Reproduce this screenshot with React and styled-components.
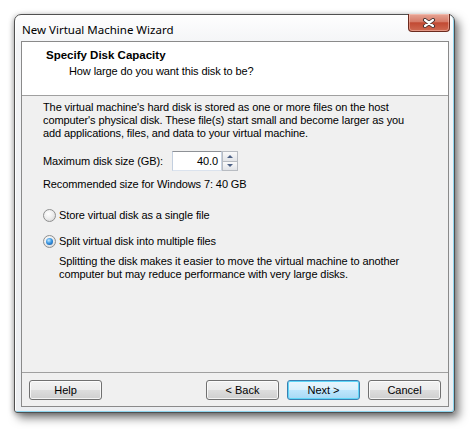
import styled, { createGlobalStyle } from 'styled-components';

const GlobalStyle = createGlobalStyle`
  html, body {
    margin: 0;
    padding: 0;
    background: #ffffff;
  }
  body {
    font-family: "Liberation Sans", Arial, sans-serif;
  }
`;

const Page = styled.div`
  width: 474px;
  height: 431px;
  box-sizing: border-box;
  padding: 14px 0 0 14px;
`;

const Window = styled.div`
  width: 441px;
  height: 399px;
  box-sizing: border-box;
  display: flex;
  flex-direction: column;
  border: 1px solid #505050;
  border-radius: 7px 7px 3px 3px;
  background: linear-gradient(to bottom, #fefefe 0%, #f3f4f6 30px, #eceef1 100%);
  box-shadow:
    inset -1px -1px 0 #8fd6ef,
    inset 1px 1px 0 #ffffff,
    4px 5px 10px rgba(0, 0, 0, 0.5),
    -1px 1px 5px rgba(0, 0, 0, 0.25);
`;

const TitleBar = styled.div`
  height: 26px;
  flex: none;
  display: flex;
  align-items: flex-start;
  justify-content: space-between;
  padding: 0 4px 0 7px;
`;

const Title = styled.div`
  font-family: "Noto Sans", "Open Sans", sans-serif;
  font-size: 11.5px;
  line-height: 26px;
  padding-top: 2px;
  color: #000;
`;

const CloseButton = styled.div`
  width: 42px;
  height: 18px;
  margin-top: -1px;
  box-sizing: border-box;
  border: 1px solid #6b2a1e;
  border-top: none;
  border-radius: 0 0 4px 4px;
  background: linear-gradient(to bottom, #e7a596 0%, #d67b68 45%, #c24a33 52%, #cf6a52 100%);
  box-shadow: inset 0 0 0 1px rgba(255, 210, 200, 0.45);
  display: flex;
  align-items: center;
  justify-content: center;
`;

const Client = styled.div`
  flex: none;
  height: 366px;
  margin: 0 5px 0 6px;
  box-sizing: border-box;
  border: 1px solid #8a8a8a;
  background: #f0f0f0;
  display: flex;
  flex-direction: column;
`;

const Header = styled.div`
  flex: none;
  box-sizing: border-box;
  height: 54px;
  background: #ffffff;
  border-bottom: 1px solid #a0a0a0;
  padding-left: 24px;
  padding-top: 7px;
`;

const HeaderTitle = styled.div`
  font-weight: bold;
  font-size: 11.5px;
  line-height: 13px;
  color: #000;
`;

const HeaderSub = styled.div`
  font-size: 11px;
  line-height: 13px;
  letter-spacing: -0.1px;
  margin-top: 3px;
  padding-left: 23px;
  color: #000;
`;

const Body = styled.div`
  flex: 1;
  padding: 5px 0 0 21px;
  font-size: 11px;
  line-height: 13px;
  letter-spacing: -0.1px;
  color: #000;
  white-space: nowrap;
`;

const Paragraph = styled.p`
  margin: ${(p) => p.$top || 0}px 0 0 ${(p) => p.$indent || 0}px;
`;

const SizeRow = styled.div`
  display: flex;
  align-items: center;
  margin-top: 11px;
  height: 20px;
`;

const SizeLabel = styled.span`
  width: 129px;
`;

const Spinner = styled.div`
  display: flex;
  height: 20px;
`;

const NumberField = styled.div`
  width: 50px;
  box-sizing: border-box;
  border: 1px solid;
  border-color: #8e9196 #c9d4e2 #dbe3ee #c3cfdf;
  background: #ffffff;
  text-align: right;
  padding-right: 3px;
  line-height: 18px;
`;

const SpinButtons = styled.div`
  display: flex;
  flex-direction: column;
  width: 16px;
`;

const SpinButton = styled.div`
  flex: 1;
  box-sizing: border-box;
  border: 1px solid #b8bcc2;
  border-top-width: ${(p) => (p.$down ? 0 : 1)}px;
  background: linear-gradient(to bottom, #fafafa, #e2e4e8);
  display: flex;
  align-items: center;
  justify-content: center;
`;

const Arrow = styled.span`
  width: 0;
  height: 0;
  border-left: 3px solid transparent;
  border-right: 3px solid transparent;
  border-bottom: ${(p) => (p.$down ? 'none' : '3px solid #4d6185')};
  border-top: ${(p) => (p.$down ? '3px solid #4d6185' : 'none')};
`;

const RadioRow = styled.label`
  display: flex;
  align-items: center;
  height: 13px;
  margin-top: ${(p) => p.$top}px;
`;

const RadioMark = styled.span`
  width: 13px;
  height: 13px;
  box-sizing: border-box;
  border-radius: 50%;
  border: 1px solid #8e8f8f;
  background: radial-gradient(circle at 40% 35%, #ffffff 0%, #ececec 50%, #cfcfcf 100%);
  display: flex;
  align-items: center;
  justify-content: center;
  margin-right: 3px;

  &::after {
    content: '';
    width: 7px;
    height: 7px;
    border-radius: 50%;
    display: ${(p) => (p.$checked ? 'block' : 'none')};
    background: radial-gradient(circle at 40% 35%, #c4e9ff 0%, #3b97e2 45%, #0c4a97 100%);
  }
`;

const Footer = styled.div`
  flex: none;
  height: 34px;
  box-sizing: border-box;
  border-top: 1px solid #a0a0a0;
  padding: 7px 7px 0 7px;
  display: flex;
  align-items: flex-start;
  gap: 8px;
`;

const Spacer = styled.div`
  flex: 1;
`;

const Button = styled.button`
  width: 73px;
  height: 20px;
  box-sizing: border-box;
  padding: 0;
  border: 1px solid ${(p) => (p.$default ? '#3c7fb1' : '#707070')};
  border-radius: 3px;
  background: ${(p) =>
    p.$default
      ? 'linear-gradient(to bottom, #eaf6fd 0%, #d9f0fc 50%, #bee6fd 50%, #a7d9f5 100%)'
      : 'linear-gradient(to bottom, #f2f2f2 0%, #ebebeb 50%, #dddddd 50%, #cfcfcf 100%)'};
  box-shadow: inset 0 0 0 1px ${(p) => (p.$default ? '#5fd6f7' : 'rgba(255, 255, 255, 0.75)')};
  font-family: "Liberation Sans", Arial, sans-serif;
  font-size: 11px;
  color: #000;
`;

const CloseGlyph = () => (
  <svg width="14" height="10" viewBox="0 0 14 10">
    <path d="M3 2 L11 8 M11 2 L3 8" stroke="#3b2b2b" strokeWidth="4" strokeLinecap="round" fill="none" />
    <path d="M3 2 L11 8 M11 2 L3 8" stroke="#ffffff" strokeWidth="2.2" strokeLinecap="round" fill="none" />
  </svg>
);

const Radio = ({ checked, top, children }) => (
  <RadioRow $top={top}>
    <RadioMark $checked={checked} />
    {children}
  </RadioRow>
);

export default function App() {
  return (
    <Page>
      <GlobalStyle />
      <Window>
        <TitleBar>
          <Title>New Virtual Machine Wizard</Title>
          <CloseButton>
            <CloseGlyph />
          </CloseButton>
        </TitleBar>
        <Client>
          <Header>
            <HeaderTitle>Specify Disk Capacity</HeaderTitle>
            <HeaderSub>How large do you want this disk to be?</HeaderSub>
          </Header>
          <Body>
            <Paragraph>
              The virtual machine's hard disk is stored as one or more files on the host
              <br />
              computer's physical disk. These file(s) start small and become larger as you
              <br />
              add applications, files, and data to your virtual machine.
            </Paragraph>
            <SizeRow>
              <SizeLabel>Maximum disk size (GB):</SizeLabel>
              <Spinner>
                <NumberField>40.0</NumberField>
                <SpinButtons>
                  <SpinButton>
                    <Arrow />
                  </SpinButton>
                  <SpinButton $down>
                    <Arrow $down />
                  </SpinButton>
                </SpinButtons>
              </Spinner>
            </SizeRow>
            <Paragraph $top={7}>Recommended size for Windows 7: 40 GB</Paragraph>
            <Radio top={18}>Store virtual disk as a single file</Radio>
            <Radio top={13} checked>
              Split virtual disk into multiple files
            </Radio>
            <Paragraph $top={7} $indent={16}>
              Splitting the disk makes it easier to move the virtual machine to another
              <br />
              computer but may reduce performance with very large disks.
            </Paragraph>
          </Body>
          <Footer>
            <Button>Help</Button>
            <Spacer />
            <Button>&lt; Back</Button>
            <Button $default>Next &gt;</Button>
            <Button>Cancel</Button>
          </Footer>
        </Client>
      </Window>
    </Page>
  );
}
